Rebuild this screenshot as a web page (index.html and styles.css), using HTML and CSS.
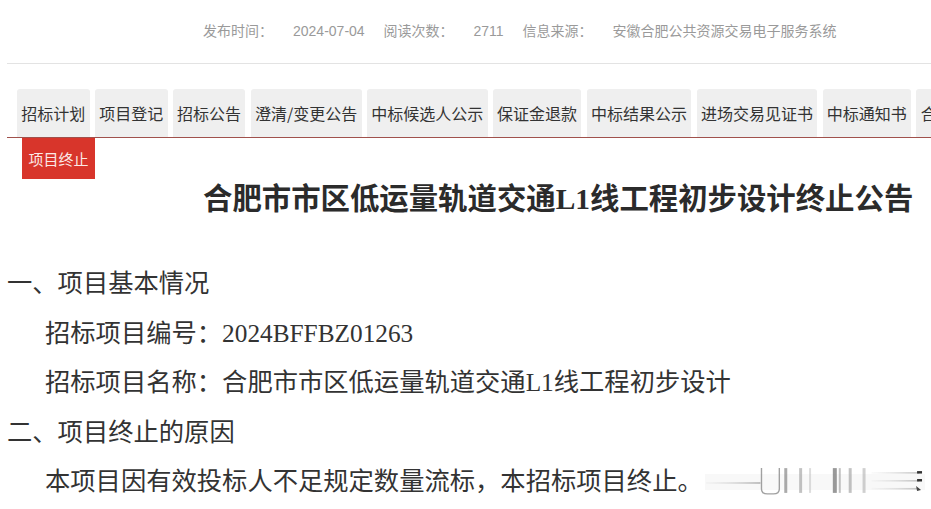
FILE: index.html
```html
<!DOCTYPE html>
<html lang="zh-CN">
<head>
<meta charset="utf-8">
<title>合肥市市区低运量轨道交通L1线工程初步设计终止公告</title>
<link rel="stylesheet" href="styles.css">
</head>
<body>
<div class="page">
  <div class="meta">
    <span class="label">发布时间：</span><span class="value">2024-07-04</span>
    <span class="label">阅读次数：</span><span class="value">2711</span>
    <span class="label">信息来源：</span><span class="value">安徽合肥公共资源交易电子服务系统</span>
  </div>
  <div class="tabs">
    <span class="tab">招标计划</span>
    <span class="tab">项目登记</span>
    <span class="tab">招标公告</span>
    <span class="tab">澄清/变更公告</span>
    <span class="tab">中标候选人公示</span>
    <span class="tab">保证金退款</span>
    <span class="tab">中标结果公示</span>
    <span class="tab">进场交易见证书</span>
    <span class="tab">中标通知书</span>
    <span class="tab">合同公示</span>
  </div>
  <div class="active-tab">项目终止</div>
  <h1 class="title">合肥市市区低运量轨道交通L1线工程初步设计终止公告</h1>
  <div class="content">
    <p class="heading">一、项目基本情况</p>
    <p class="item">招标项目编号：2024BFFBZ01263</p>
    <p class="item">招标项目名称：合肥市市区低运量轨道交通L1线工程初步设计</p>
    <p class="heading">二、项目终止的原因</p>
    <p class="item">本项目因有效投标人不足规定数量流标，本招标项目终止。<svg class="mark" width="220" height="34" viewBox="0 0 222 34">
        <defs>
          <linearGradient id="fade" x1="0" x2="1" y1="0" y2="0">
            <stop offset="0" stop-color="#ccc" stop-opacity="0.1"/>
            <stop offset="1" stop-color="#999" stop-opacity="0.6"/>
          </linearGradient>
          <filter id="blur"><feGaussianBlur stdDeviation="0.7"/></filter>
        </defs>
        <g filter="url(#blur)">
          <rect x="0" y="10" width="222" height="16" fill="#f3f3f3" opacity="0.6"/>
          <rect x="1" y="18" width="55" height="2" fill="url(#fade)"/>
          <path d="M57 4 V25 Q57 30 63 30 H69 Q75 30 75 25 V4" fill="none" stroke="#8a8a8a" stroke-width="1.4" opacity="0.8"/>
          <rect x="80" y="4" width="3" height="25" fill="#888" opacity="0.7"/>
          <rect x="95" y="4" width="3" height="25" fill="#999" opacity="0.6"/>
          <rect x="105" y="4" width="2" height="25" fill="#bbb" opacity="0.5"/>
          <rect x="129" y="4" width="4" height="25" fill="#777" opacity="0.75"/>
          <rect x="135" y="4" width="2" height="25" fill="#999" opacity="0.6"/>
          <rect x="145" y="4" width="3" height="25" fill="#999" opacity="0.6"/>
          <rect x="159" y="4" width="3" height="25" fill="#aaa" opacity="0.55"/>
          <rect x="168" y="8" width="48" height="1.6" fill="url(#fade)"/>
          <rect x="168" y="16" width="48" height="1.6" fill="url(#fade)"/>
          <rect x="168" y="24" width="48" height="1.6" fill="url(#fade)"/>
          <rect x="214" y="7" width="5" height="2.5" fill="#333"/>
          <rect x="214" y="15" width="5" height="2.5" fill="#333"/>
          <path d="M213 22 L218 26 L214 27 Z" fill="#444"/>
        </g>
      </svg></p>
  </div>
</div>
</body>
</html>
```

FILE: styles.css
```css
html, body {
  margin: 0;
  padding: 0;
  background: #ffffff;
}

.page {
  margin-left: 7px;
  width: 924px;
  overflow: hidden;
}

.meta {
  padding: 21px 0 22px 196px;
  height: 20px;
  line-height: 20px;
  border-bottom: 1px solid #e3e3e3;
  font-family: "Liberation Sans", "Noto Sans CJK SC", sans-serif;
  font-size: 14px;
  color: #9a9a9a;
  white-space: nowrap;
}

.meta .label {
  margin-right: 20px;
}

.meta .value {
  margin-right: 15px;
}

.tabs {
  margin-top: 25px;
  padding-left: 10px;
  display: flex;
  gap: 5.3px;
  border-bottom: 1px solid #a0514c;
  white-space: nowrap;
  overflow: hidden;
}

.tab {
  flex: none;
  height: 48px;
  line-height: 48px;
  padding: 0 4.3px;
  background: #efefef;
  border-radius: 3px 3px 0 0;
  font-family: "Noto Sans CJK SC", sans-serif;
  font-size: 16px;
  color: #333333;
}

.active-tab {
  margin-left: 15px;
  width: 73px;
  height: 41px;
  line-height: 41px;
  background: #d8352b;
  color: #fbe9e6;
  font-family: "Noto Sans CJK SC", sans-serif;
  font-size: 15px;
  text-align: center;
}

.title {
  margin: 0 0 0 196px;
  height: 40px;
  line-height: 40px;
  font-family: "Liberation Serif", "Noto Sans CJK SC", serif;
  font-size: 29.4px;
  font-weight: bold;
  color: #2b2b2b;
  white-space: nowrap;
}

.content {
  margin-top: 40px;
  font-family: "Liberation Serif", "Noto Sans CJK SC", serif;
  font-size: 25.3px;
  color: #333333;
}

.content p {
  margin: 0;
  height: 49.5px;
  line-height: 49.5px;
  white-space: nowrap;
}

.content .item {
  padding-left: 38px;
}

.mark {
  margin-left: 2px;
  vertical-align: -8px;
}
```
